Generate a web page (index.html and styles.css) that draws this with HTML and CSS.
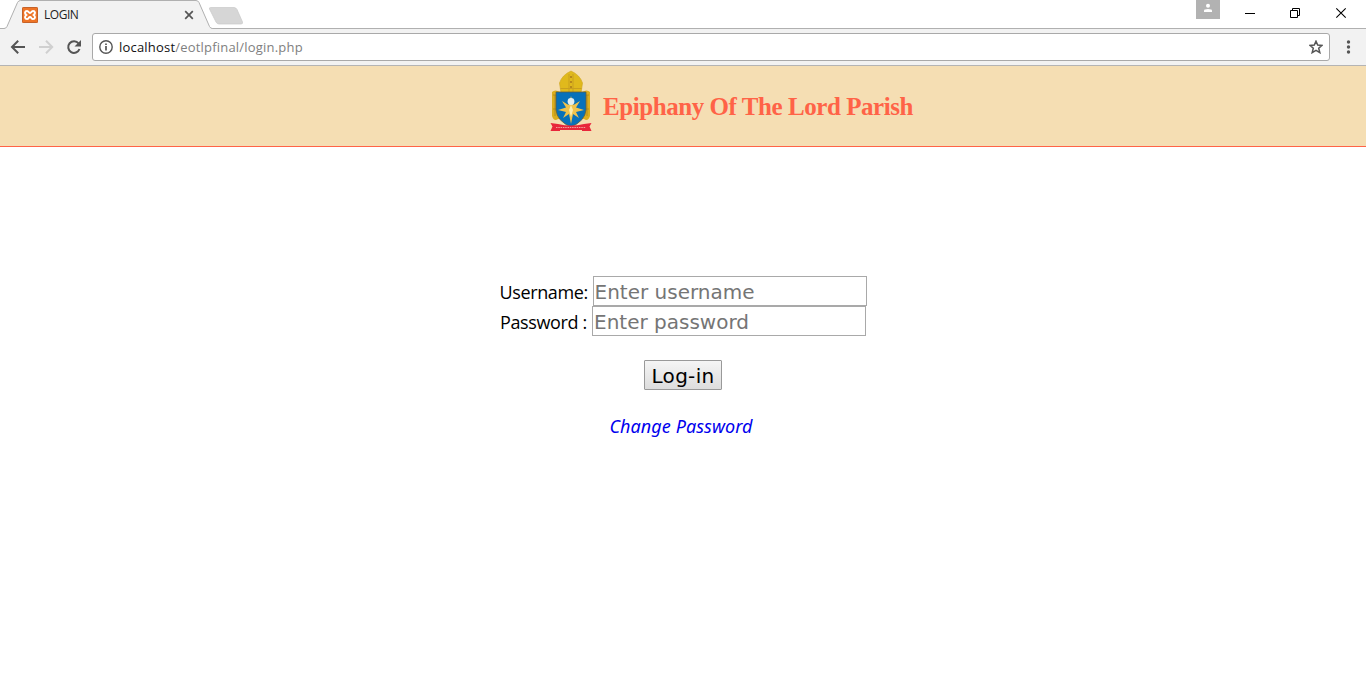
FILE: index.html
```html
<!DOCTYPE html>
<html lang="en">
<head>
<meta charset="utf-8">
<title>LOGIN</title>
<link rel="stylesheet" href="styles.css">
</head>
<body>
<div class="tabstrip">
  <svg class="tab-shape" width="250" height="29" viewBox="0 0 250 29">
    <path d="M0 28.5H4Q6 28.5 7 26.5L17.500 2.500Q18.500 .5 20.500 .5H196Q198 .5 199 2.500L209.500 26.500Q210.500 28.500 212.500 28.500V29H0Z" fill="#f2f2f2"/>
    <path d="M0 28.500H4Q6 28.500 7 26.500L17.500 2.500Q18.500 .5 20.500 .5H196Q198 .5 199 2.500L209.500 26.500Q210.500 28.500 212.500 28.500H250" fill="none" stroke="#b0b0b0"/>
    <path d="M210.500 7.500H234Q236 7.500 237 9.500L242.500 22Q243 24 241 24H219Q217 24 216 22L209.500 9Q209 7.500 210.500 7.500Z" fill="#d6d6d6" stroke="#c8c8c8" stroke-width=".7"/>
  </svg>
  <div class="tab">
    <svg width="16" height="16" viewBox="0 0 16 16">
      <rect width="16" height="16" rx="1.500" fill="#ee7426"/>
      <rect x=".5" y=".5" width="15" height="15" rx="1" fill="none" stroke="#c4622a"/>
      <path d="M4.300 8C2.300 6.500 2.800 3.900 5 3.900C6.800 3.900 6.500 6 8 6C9.500 6 9.200 3.900 11 3.900C13.200 3.900 13.700 6.500 11.700 8C13.700 9.500 13.200 12.100 11 12.100C9.200 12.100 9.500 10 8 10C6.500 10 6.800 12.100 5 12.100C2.800 12.100 2.300 9.500 4.300 8Z" fill="none" stroke="#fff" stroke-width="2"/>
    </svg>
    <span class="tab-title">LOGIN</span>
    <svg class="tab-close" width="10" height="10" viewBox="0 0 10 10"><path d="M1.200 1.200L8.800 8.800M8.800 1.200L1.200 8.800" stroke="#555" stroke-width="1.700"/></svg>
  </div>
  <div class="window-controls">
    <svg width="170" height="28" viewBox="0 0 170 28">
      <rect width="24" height="19" fill="#b2b2b2"/>
      <circle cx="12" cy="5.700" r="2" fill="#fff"/>
      <path d="M8 12V10.500Q8 9 12 9Q16 9 16 10.500V12Z" fill="#fff"/>
      <path d="M49 13.500H59" stroke="#000"/>
      <path d="M94.500 10.500H101.500V17.500H94.500ZM96.500 10.500V8.500H103.500V15.500H101.500" fill="none" stroke="#000"/>
      <path d="M140.300 8.300L149.700 17.700M149.700 8.300L140.300 17.700" stroke="#000" stroke-width="1.100"/>
    </svg>
  </div>
</div>

<div class="toolbar">
  <svg width="92" height="36" viewBox="0 0 92 36">
    <path d="M25 18H12.500M18.200 11.800L12 18L18.200 24.200" fill="none" stroke="#555" stroke-width="2"/>
    <path d="M39 18H51.500M46 11.800L52.200 18L46 24.200" fill="none" stroke="#d0d0d0" stroke-width="2"/>
    <path d="M78.600 14.500A5.800 5.800 0 1 0 79.500 20" fill="none" stroke="#555" stroke-width="2"/>
    <path d="M81 11V17.500H74.500Z" fill="#555"/>
  </svg>
  <div class="omnibox">
    <svg width="14" height="14" viewBox="0 0 14 14">
      <circle cx="7" cy="7" r="6.200" fill="none" stroke="#555" stroke-width="1.400"/>
      <path d="M7 6V10.500M7 3.500V5" stroke="#555" stroke-width="1.700"/>
    </svg>
    <span class="url">localhost<span class="path">/eotlpfinal/login.php</span></span>
    <svg class="star" width="14" height="14" viewBox="0 0 14 14"><path d="M7 1.200L8.700 5.100L13 5.400L9.700 8.300L10.800 12.600L7 10.300L3.200 12.600L4.300 8.300L1 5.400L5.300 5.100Z" fill="none" stroke="#555" stroke-width="1.500"/></svg>
  </div>
  <svg width="36" height="36" viewBox="0 0 36 36" fill="#555"><circle cx="18.500" cy="13" r="1.700"/><circle cx="18.500" cy="18" r="1.700"/><circle cx="18.500" cy="23" r="1.700"/></svg>
</div>

<header class="banner">
  <svg class="crest" width="42" height="62" viewBox="0 0 42 62">
    <path d="M11 23L9.500 13Q12 5 21 1Q30 5 32.500 13L31 23Z" fill="#e0b91c" stroke="#cda51c" stroke-width=".6"/>
    <path d="M19 4V22M23 4V22M10.500 18.500H31.500" fill="none" stroke="#c99f1e" stroke-width="1"/>
    <path d="M21 6V8M21 11V13M21 16V18" stroke="#a9781c" stroke-width="1.500"/>
    <path d="M2 22Q5 19 10 22H32Q37 19 40 22V46Q38 52 34 49H8Q4 52 2 46Z" fill="#dcae1e"/>
    <path d="M3 25H9M33 25H39M3 39H8M34 39H39M5 25V46M37 25V46" stroke="#a98520" stroke-width=".8"/>
    <path d="M6 22H36V40Q35 51 21 57Q7 51 6 40Z" fill="#0871b9" stroke="#625e3e" stroke-width=".8"/>
    <path d="M21 26L23.500 35L30 31L26 37.500L34 40L26 42L29 48L23 44L21 54L19 44L13 48L16 42L8 40L16 37.500L12 31L18.500 35Z" fill="#f0c34d"/>
    <circle cx="21" cy="31.500" r="3.400" fill="#e3eef0"/>
    <path d="M21 35L23 40L21 47L19 40Z" fill="#f9edaf"/>
    <path d="M.5 53L8 54Q21 57 34 54L41.500 53L39.500 56.500L41.500 61H32V60H10V61H.5L2.500 56.500Z" fill="#e8263b"/>
    <path d="M6 57.500H36" fill="none" stroke="#f2a19b" stroke-width="1" stroke-dasharray="1.500 .8"/>
  </svg>
  <h1 class="parish">Epiphany Of The Lord Parish</h1>
</header>

<form class="login">
  <div class="field user"><label for="u">Username:</label><input id="u" type="text" placeholder="Enter username"></div>
  <div class="field pass"><label for="p">Password :</label><input id="p" type="password" placeholder="Enter password"></div>
  <button class="submit" type="button">Log-in</button>
  <a class="change" href="#">Change Password</a>
</form>
</body>
</html>
```
FILE: styles.css
```css
* { box-sizing: border-box; }
body { margin: 0; height: 691px; overflow: hidden; background: #fff; font-family: "Noto Sans", "Open Sans", sans-serif; }
svg { display: block; flex: none; }

.tabstrip { position: relative; display: flex; justify-content: space-between; height: 29px; border-bottom: 1px solid #b0b0b0; }
.tab-shape { position: absolute; left: 0; top: 0; }
.tab { position: relative; display: flex; align-items: center; width: 194px; height: 29px; padding-left: 22px; }
.tab-title { margin-left: 6px; font-family: "Open Sans", sans-serif; font-size: 12px; letter-spacing: -0.45px; color: #222; }
.tab-close { margin-left: auto; }

.toolbar { display: flex; height: 37px; background: #f2f2f2; border-bottom: 1px solid #b4b4b4; }
.omnibox { display: flex; align-items: center; width: 1238px; height: 28px; margin-top: 4px; padding: 0 6px; background: #fff; border: 1px solid #a9a9a9; border-radius: 3px; }
.url { margin-left: 6px; font-family: "Open Sans", sans-serif; font-size: 13px; letter-spacing: 0.2px; color: #111; white-space: nowrap; }
.path { color: #808080; }
.star { margin-left: auto; }

.banner { display: flex; height: 81px; padding-left: 550px; background: #f5deb3; border-bottom: 1px solid #ff6347; }
.crest { margin-top: 4px; }
.parish { margin: 25px 0 0 11px; font: bold 25px/32px "Liberation Serif", serif; letter-spacing: -0.44px; color: #ff6347; white-space: nowrap; }

.login { display: flex; flex-direction: column; align-items: center; padding-top: 129px; }
.field { display: flex; width: 367px; height: 30px; justify-content: space-between; }
.pass { width: 366px; }
.field label { font-family: "Open Sans", sans-serif; font-size: 18px; letter-spacing: -0.38px; line-height: 33px; color: #000; white-space: nowrap; }
.field input { width: 274px; height: 30px; margin: 0; padding: 2px 1px 0; border: 1px solid #a9a9a9; border-radius: 0; font: 20px "DejaVu Sans", sans-serif; }
.field input::placeholder { color: #757575; }
.submit { width: 78px; height: 30px; margin: 24px 0 0; padding: 2px 0 0; border: 1px solid #999; border-radius: 1px; background: linear-gradient(#f5f5f5, #dddddd); font: 20px "DejaVu Sans", sans-serif; letter-spacing: 0.3px; color: #000; }
.change { margin: 23px 4px 0 0; font-size: 18px; letter-spacing: 0.07px; font-style: italic; line-height: 26px; color: #0000ee; text-decoration: none; white-space: nowrap; }
```
